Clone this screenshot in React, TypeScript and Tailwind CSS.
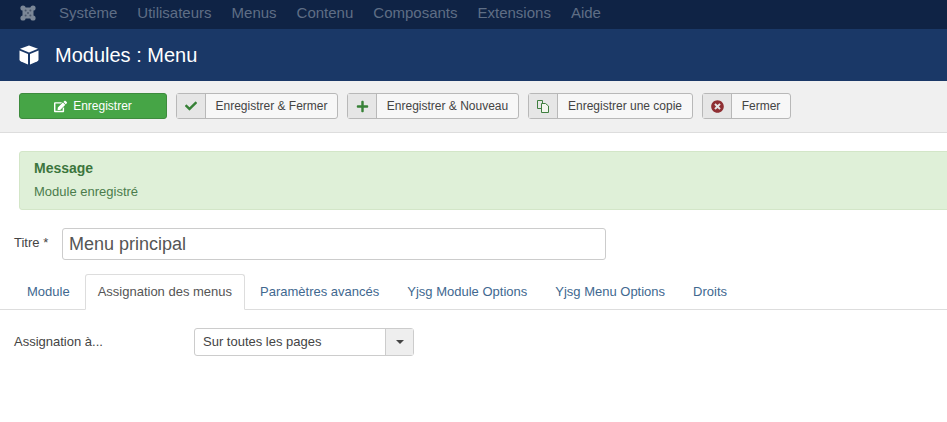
import { FaCheck, FaPlus, FaTimesCircle, FaEdit } from "react-icons/fa";
import { ReactNode } from "react";

const menus = ["Système", "Utilisateurs", "Menus", "Contenu", "Composants", "Extensions", "Aide"];
const tabs = ["Paramètres avancés", "Yjsg Module Options", "Yjsg Menu Options", "Droits"];

const JoomlaLogo = () => (
  <svg width="16" height="16" viewBox="0 0 16 16">
    <rect x="2.5" y="2.5" width="11" height="11" fill="#7b8797" />
    <circle cx="3" cy="3" r="2.6" fill="#7b8797" />
    <circle cx="13" cy="3" r="2.6" fill="#7b8797" />
    <circle cx="3" cy="13" r="2.6" fill="#7b8797" />
    <circle cx="13" cy="13" r="2.6" fill="#7b8797" />
    <circle cx="5.6" cy="5.6" r="1" fill="#4a566a" />
    <circle cx="10.4" cy="5.6" r="1" fill="#4a566a" />
    <circle cx="5.6" cy="10.4" r="1" fill="#4a566a" />
    <circle cx="10.4" cy="10.4" r="1" fill="#4a566a" />
    <circle cx="8" cy="8" r="1" fill="#4a566a" />
  </svg>
);

const CubeIcon = () => (
  <svg width="20" height="20" viewBox="0 0 20 20" fill="#fff">
    <path d="M10 0.5 L19 3.8 L10 7.4 L1 3.8 Z" />
    <path d="M0.5 5.6 L9 9 L9 19.5 L2 16.4 Q0.5 15.7 0.5 14.4 Z" />
    <path d="M19.5 5.6 L11 9 L11 19.5 L18 16.4 Q19.5 15.7 19.5 14.4 Z" />
  </svg>
);

const CopyIcon = () => (
  <svg width="12" height="13" viewBox="0 0 12 13" fill="none" stroke="#3f7f3f" strokeWidth="1">
    <path d="M0.5 0.5 H5.5 V3.5 M0.5 0.5 V8.5 H4.5" />
    <path d="M4.5 3.5 H8.5 L11.5 6 V12.5 H4.5 Z" fill="#f3f6ee" />
  </svg>
);

const ToolButton = ({ icon, label, w }: { icon: ReactNode; label: string; w: string }) => (
  <div className={`flex h-[26px] items-stretch rounded-[3px] border border-[#b8b8b8] bg-[#f7f7f7] ${w}`}>
    <div className="flex w-[29px] shrink-0 items-center justify-center border-r border-[#b8b8b8] bg-[#e6e6e6]">{icon}</div>
    <div className="flex flex-1 items-center justify-center text-[12px] text-[#444]">{label}</div>
  </div>
);

const App = () => {
  return (
    <div className="h-[422px] w-[947px] overflow-hidden bg-white font-['Liberation_Sans',Arial,sans-serif] text-[#333]">
      {/* top nav */}
      <div className="flex h-[29px] items-center bg-[#0f2345] pb-[3px] pl-[20px]">
        <JoomlaLogo />
        <nav className="ml-[23px] flex gap-[20px] text-[15px] text-[#5f6e85]">
          {menus.map((m) => (
            <span key={m}>{m}</span>
          ))}
        </nav>
      </div>

      {/* title bar */}
      <div className="flex h-[52px] items-center bg-[#1a3867] pl-[19px] text-white">
        <CubeIcon />
        <h1 className="ml-[16px] text-[20px] leading-none">Modules : Menu</h1>
      </div>

      {/* toolbar */}
      <div className="flex h-[52px] items-start gap-[9px] border-b border-[#ddd] bg-[#f0f0f0] pl-[19px] pt-[12px]">
        <div className="flex h-[26px] w-[148px] items-center justify-center gap-[6px] rounded-[3px] border border-[#3d8b3d] bg-[#46a546] text-[12px] text-white">
          <FaEdit className="text-[13px]" />
          Enregistrer
        </div>
        <ToolButton w="w-[162px]" label="Enregistrer & Fermer" icon={<FaCheck className="text-[12px] text-[#378137]" />} />
        <ToolButton w="w-[172px]" label="Enregistrer & Nouveau" icon={<FaPlus className="text-[13px] text-[#378137]" />} />
        <ToolButton w="w-[165px]" label="Enregistrer une copie" icon={<CopyIcon />} />
        <ToolButton w="w-[89px]" label="Fermer" icon={<FaTimesCircle className="text-[13px] text-[#8f2f33]" />} />
      </div>

      <main className="pt-[18px]">
        {/* message */}
        <div className="ml-[19px] h-[59px] w-[940px] rounded-[3px] border border-[#d3e6c8] bg-[#dff0d8] pl-[14px] pt-[8px] text-[#3c763d]">
          <div className="text-[14px] font-bold leading-[16px]">Message</div>
          <div className="mt-[7px] text-[13px] leading-[18px] text-[#4b7c4c]">Module enregistré</div>
        </div>

        {/* title field */}
        <div className="mt-[18px] flex items-center pl-[14px]">
          <label className="-mt-[2px] w-[48px] text-[13px] leading-[18px] text-[#444]">Titre *</label>
          <div className="flex h-[32px] w-[544px] items-center rounded-[3px] border border-[#ccc] bg-white pl-[6px] text-[18px] text-[#555]">
            Menu principal
          </div>
        </div>

        {/* tabs */}
        <div className="mt-[14px] flex h-[36px] items-end border-b border-[#ddd] pl-[14px] text-[13px] text-[#41688f]">
          <span className="flex h-[35px] items-center pl-[13px] pr-[15px]">Module</span>
          <span className="-mb-px mr-px flex h-[36px] items-center rounded-t-[3px] border border-b-white border-[#ddd] bg-white px-[12px] text-[#555]">
            Assignation des menus
          </span>
          {tabs.map((t) => (
            <span key={t} className="flex h-[35px] items-center px-[14px]">
              {t}
            </span>
          ))}
        </div>

        {/* assignment */}
        <div className="mt-[18px] flex items-center pl-[14px]">
          <label className="w-[180px] text-[13px] text-[#444]">Assignation à...</label>
          <div className="flex h-[28px] w-[220px] items-stretch rounded-[3px] border border-[#ccc] bg-white text-[13px] text-[#444]">
            <div className="flex flex-1 items-center pl-[8px]">Sur toutes les pages</div>
            <div className="flex w-[28px] items-center justify-center border-l border-[#ccc] bg-[#eee]">
              <span className="h-0 w-0 border-x-[4px] border-t-[4px] border-x-transparent border-t-[#444]" />
            </div>
          </div>
        </div>
      </main>
    </div>
  );
};

export default App;
